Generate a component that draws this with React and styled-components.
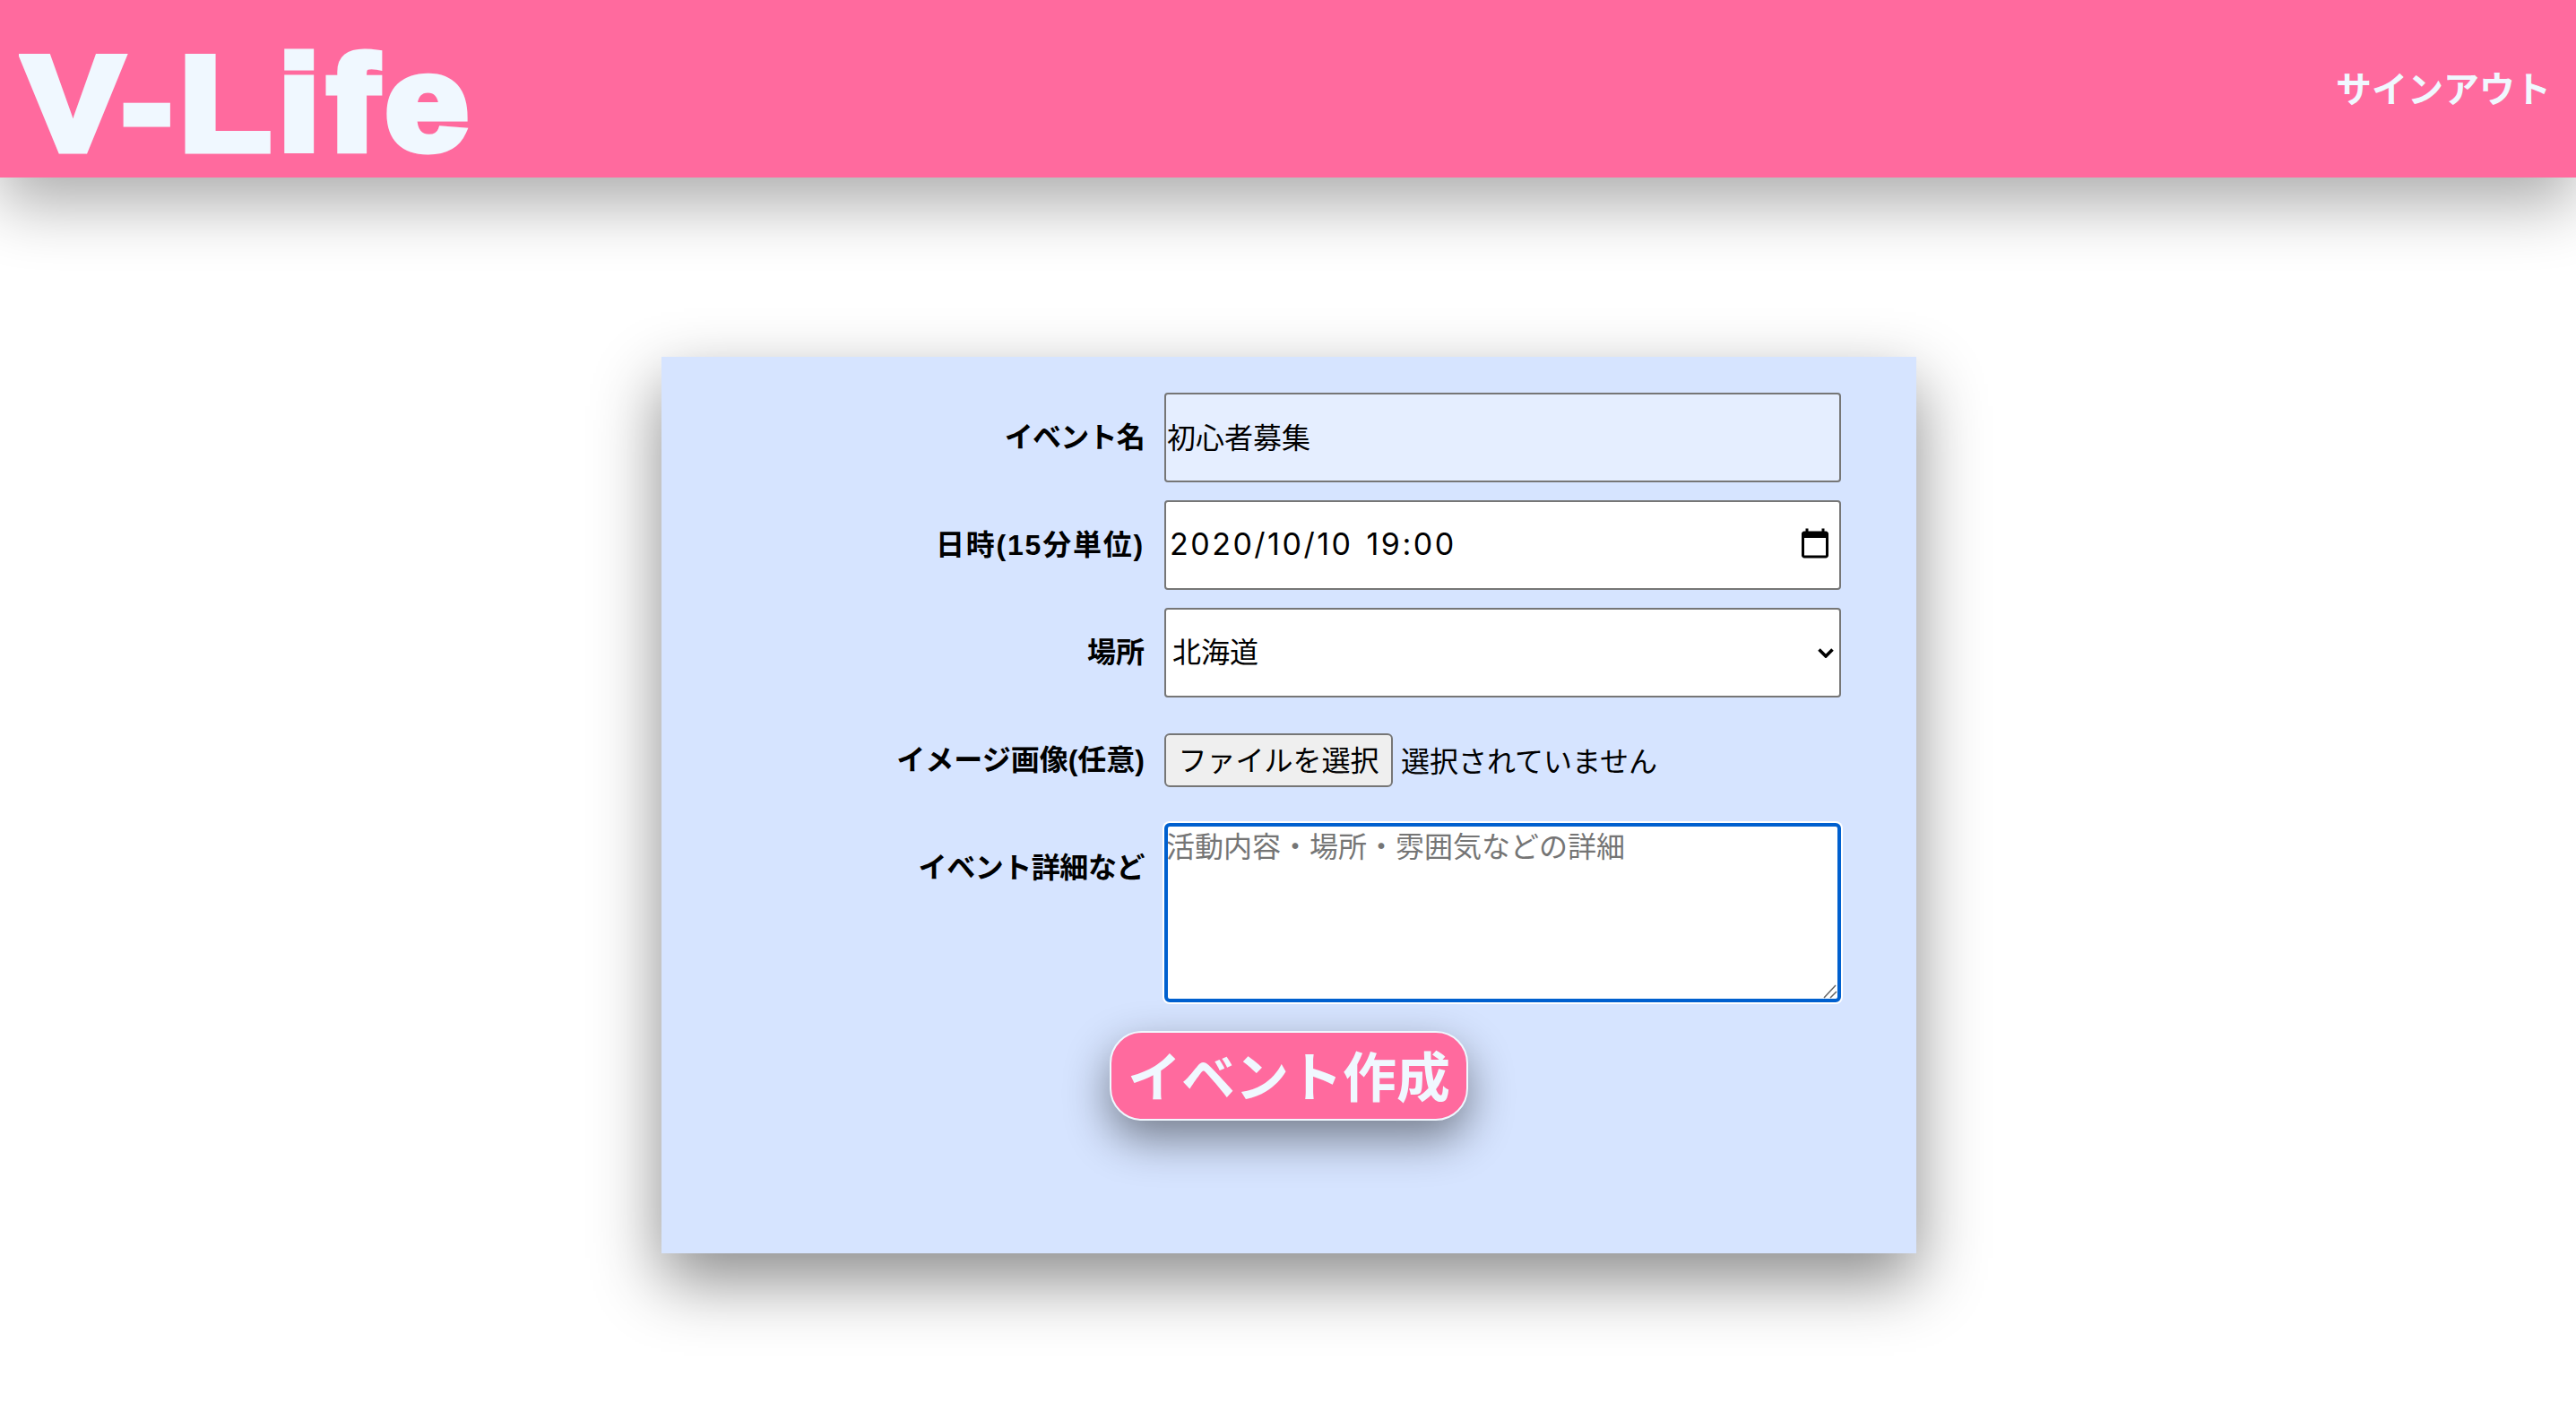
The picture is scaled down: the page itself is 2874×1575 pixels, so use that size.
import React from 'react';
import styled, { createGlobalStyle } from 'styled-components';

const GlobalStyle = createGlobalStyle`
  * {
    box-sizing: border-box;
  }
  body {
    margin: 0;
    background: #fff;
    color: #000;
    font-family: "Liberation Sans", "Noto Sans CJK JP", sans-serif;
  }
`;

const Header = styled.header`
  display: flex;
  align-items: center;
  justify-content: space-between;
  height: 198px;
  padding: 0 28px 0 26px;
  background: #ff6a9e;
  color: aliceblue;
  box-shadow: 0 30px 70px rgba(0, 0, 0, 0.32);
`;

const Logo = styled.h1`
  margin: 34px 0 0;
  font-family: "Liberation Sans", sans-serif;
  font-size: 148px;
  font-weight: 700;
  line-height: 1;
  letter-spacing: 8px;
  -webkit-text-stroke: 9px aliceblue;
  transform: scaleX(1.12);
  transform-origin: left center;
`;

const SignOut = styled.a`
  padding-bottom: 4px;
  font-size: 40px;
  font-weight: 700;
  cursor: pointer;
`;

const Main = styled.main`
  display: flex;
  justify-content: center;
  padding: 200px 0 177px 2px;
`;

const Card = styled.form`
  display: flex;
  flex-direction: column;
  gap: 20px;
  width: 1400px;
  height: 1000px;
  padding-top: 40px;
  background: #d6e4ff;
  box-shadow: 0 30px 70px rgba(0, 0, 0, 0.46);
`;

const Row = styled.div`
  display: grid;
  grid-template-columns: 539px 755px;
  column-gap: 22px;
  align-items: start;
`;

const Label = styled.label`
  height: 100px;
  font-size: 32px;
  font-weight: 700;
  line-height: 100px;
  letter-spacing: ${(props) => props.$tracking || 0}px;
  text-align: right;
`;

const fieldBase = `
  width: 755px;
  height: 100px;
  border: 2px solid #767676;
  border-radius: 4px;
  font-family: "Liberation Sans", "Noto Sans CJK JP", sans-serif;
  font-size: 32px;
  color: #000;
  outline: none;
`;

const TextInput = styled.input`
  ${fieldBase}
  display: block;
  padding: 0 1px 4px;
  background: #e5eeff;
`;

const DateField = styled.div`
  ${fieldBase}
  display: flex;
  align-items: center;
  justify-content: space-between;
  padding: 0 9px 4px 4px;
  background: #fff;
  font-family: "Inter", sans-serif;
  font-size: 34px;
  letter-spacing: 2.5px;
  word-spacing: 3px;
`;

const CalendarIcon = styled.svg`
  width: 36px;
  height: 36px;
  fill: #000;
`;

const SelectWrap = styled.div`
  position: relative;
  width: 755px;
`;

const Select = styled.select`
  ${fieldBase}
  display: block;
  appearance: none;
  padding: 0 7px;
  background: #fff;
`;

const Chevron = styled.svg`
  position: absolute;
  top: 44px;
  right: 8px;
  width: 18px;
  height: 12px;
  fill: none;
  stroke: #000;
  stroke-width: 3.6;
  pointer-events: none;
`;

const FileRow = styled.div`
  display: flex;
  align-items: center;
  gap: 9px;
  height: 100px;
  font-size: 32px;
`;

const FileName = styled.span`
  padding-bottom: 2px;
`;

const FileButton = styled.button`
  width: 255px;
  height: 60px;
  padding: 0 0 4px;
  background: #efefef;
  border: 2px solid #767676;
  border-radius: 6px;
  color: #000;
  font-family: inherit;
  font-size: 32px;
  cursor: pointer;
`;

const TextAreaWrap = styled.div`
  position: relative;
  width: 755px;
`;

const TextArea = styled.textarea`
  display: block;
  width: 755px;
  height: 200px;
  padding: 1px 0 0;
  background: #fff;
  border: 4px solid #0060cf;
  border-radius: 6px;
  box-shadow: 0 0 0 2px #fff;
  outline: none;
  resize: none;
  font-family: "Liberation Sans", "Noto Sans CJK JP", sans-serif;
  font-size: 32px;
  line-height: 44px;
  text-indent: -2px;
  &::placeholder {
    color: #757575;
    opacity: 1;
  }
`;

const ResizeHandle = styled.svg`
  position: absolute;
  right: 4px;
  bottom: 4px;
  width: 16px;
  height: 16px;
  fill: none;
  stroke: #666;
  stroke-width: 1.5;
  pointer-events: none;
`;

const SubmitWrap = styled.div`
  display: flex;
  justify-content: center;
  margin-top: 12px;
`;

const SubmitButton = styled.button`
  width: 400px;
  height: 100px;
  padding: 0 0 6px;
  background: #ff6a9e;
  border: 2px solid #f0f8ff;
  border-radius: 36px;
  box-shadow: 0 20px 50px rgba(0, 0, 0, 0.45);
  color: aliceblue;
  font-family: inherit;
  font-size: 60px;
  font-weight: 700;
  cursor: pointer;
`;

const App = () => {
  return (
    <>
      <GlobalStyle />
      <Header>
        <Logo>V-Life</Logo>
        <SignOut>サインアウト</SignOut>
      </Header>
      <Main>
        <Card onSubmit={(e) => e.preventDefault()}>
          <Row>
            <Label $tracking={-0.75}>イベント名</Label>
            <TextInput type="text" defaultValue="初心者募集" />
          </Row>
          <Row>
            <Label $tracking={1.8}>日時(15分単位)</Label>
            <DateField>
              <span>2020/10/10 19:00</span>
              <CalendarIcon viewBox="0 0 24 24">
                <path d="M20 3h-1V1h-2v2H7V1H5v2H4c-1.1 0-2 .9-2 2v16c0 1.1.9 2 2 2h16c1.1 0 2-.9 2-2V5c0-1.1-.9-2-2-2zm0 18H4V8h16v13z" />
              </CalendarIcon>
            </DateField>
          </Row>
          <Row>
            <Label>場所</Label>
            <SelectWrap>
              <Select defaultValue="北海道">
                <option>北海道</option>
                <option>東京都</option>
                <option>大阪府</option>
              </Select>
              <Chevron viewBox="0 0 18 12">
                <path d="M1.5 2.5 9 10l7.5-7.5" />
              </Chevron>
            </SelectWrap>
          </Row>
          <Row>
            <Label>イメージ画像(任意)</Label>
            <FileRow>
              <FileButton type="button">ファイルを選択</FileButton>
              <FileName>選択されていません</FileName>
            </FileRow>
          </Row>
          <Row>
            <Label $tracking={-0.45}>イベント詳細など</Label>
            <TextAreaWrap>
              <TextArea placeholder="活動内容・場所・雰囲気などの詳細" />
              <ResizeHandle viewBox="0 0 16 16">
                <path d="M1 15 14 1M8 15 15 8" />
              </ResizeHandle>
            </TextAreaWrap>
          </Row>
          <SubmitWrap>
            <SubmitButton type="submit">イベント作成</SubmitButton>
          </SubmitWrap>
        </Card>
      </Main>
    </>
  );
};

export default App;
